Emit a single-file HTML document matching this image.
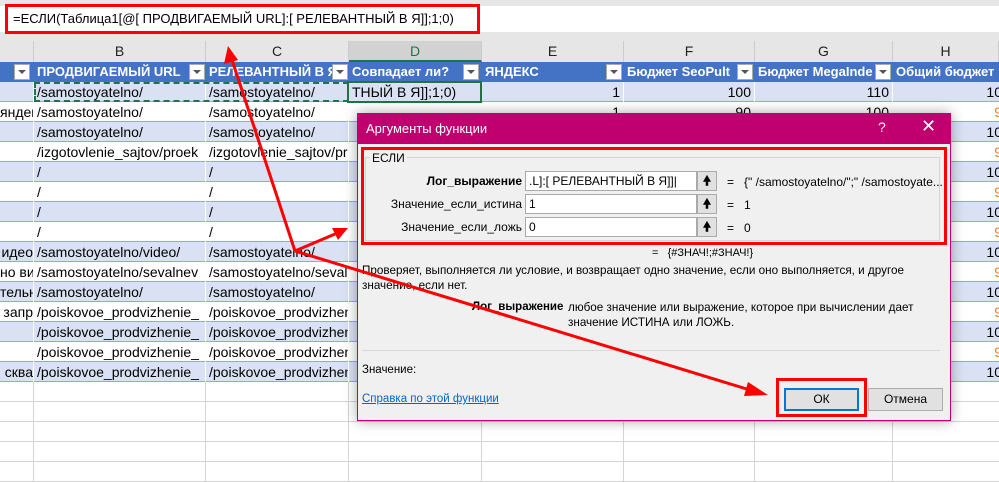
<!DOCTYPE html>
<html><head><meta charset="utf-8"><style>
*{margin:0;padding:0;box-sizing:border-box}
body{width:999px;height:470px;overflow:hidden;background:#fff;font-family:"Liberation Sans","DejaVu Sans",sans-serif;position:relative}
.a{position:absolute}
.r{position:absolute;left:0;width:1040px;height:20px;border-bottom:1px solid #D4D4D4}
.r.t{border-bottom:1px solid #8EA9DB}
.r.b{background:#D9E1F2}
.c{position:absolute;top:0;height:20px;line-height:20px;font-size:14px;color:#000;white-space:nowrap;overflow:hidden;padding:0 3px;border-right:1px solid #D4D4D4}
.r.t .c{border-right:1px solid #fff}
.r.b .c{border-right:1px solid #fff}
.A{left:0;width:34px;text-align:right;padding:0}
.B{left:34px;width:172px}.C{left:206px;width:143px}.D{left:349px;width:133px}.E{left:482px;width:142px;text-align:right}.F{left:624px;width:131px;text-align:right}.G{left:755px;width:138px;text-align:right}.H{left:893px;width:113px;text-align:right;border-right:none}
.o{color:#E67E22}
.hd .c{color:#fff;font-weight:bold;background:#4472C4;border-right:1px solid #4472C4;font-size:13px}
.dd{position:absolute;top:2px;width:16px;height:16px;background:#fff;border:1px solid #aaa}
.dd:after{content:"";position:absolute;left:3px;top:5px;border-left:4px solid transparent;border-right:4px solid transparent;border-top:4px solid #555}
.ch{position:absolute;top:41px;height:21px;background:#E6E6E6;border-right:1px solid #ccc;text-align:center;font-size:14px;line-height:21px;color:#222}
.lbl{position:absolute;font-size:12px;color:#000;white-space:nowrap}
.inp{position:absolute;left:525px;width:172px;height:20px;background:#fff;border:1px solid #aaa;font-size:12px;line-height:18px;padding-left:3px}
.ub{position:absolute;left:697px;width:20px;height:20px;background:#E1E1E1;border:1px solid #aaa;font-size:13px;text-align:center;line-height:18px;font-weight:bold}
</style></head><body>
<div class="a" style="left:0;top:0;width:999px;height:41px;background:#E6E6E6"></div>
<div class="a" style="left:0;top:6px;width:999px;height:26px;background:#fff"></div>
<div class="a" style="left:5px;top:4px;width:475px;height:30px;border:3px solid #f00"></div>
<div class="a" style="left:13px;top:11px;font-size:13px;color:#000">=ЕСЛИ(Таблица1[@[ ПРОДВИГАЕМЫЙ URL]:[ РЕЛЕВАНТНЫЙ В Я]];1;0)</div>
<div class="ch" style="left:0;width:34px"></div>
<div class="ch" style="left:34px;width:172px">B</div>
<div class="ch" style="left:206px;width:143px">C</div>
<div class="ch" style="left:349px;width:133px;background:#D2D2D2;border-bottom:2px solid #217346;color:#217346">D</div>
<div class="ch" style="left:482px;width:142px">E</div>
<div class="ch" style="left:624px;width:131px">F</div>
<div class="ch" style="left:755px;width:138px">G</div>
<div class="ch" style="left:893px;width:106px">H</div>
<div class="r hd" style="top:62px;border:none">
<div class="c A"><div class="dd" style="left:14px"></div></div>
<div class="c B">ПРОДВИГАЕМЫЙ URL<div class="dd" style="left:155px"></div></div>
<div class="c C">РЕЛЕВАНТНЫЙ В Я<div class="dd" style="left:126px"></div></div>
<div class="c D" style="background:#4472C4">Совпадает ли?<div class="dd" style="left:114px"></div></div>
<div class="c E" style="text-align:left">ЯНДЕКС<div class="dd" style="left:124px"></div></div>
<div class="c F" style="text-align:left">Бюджет SeoPult<div class="dd" style="left:113px"></div></div>
<div class="c G" style="text-align:left">Бюджет MegaInde<div class="dd" style="left:120px"></div></div>
<div class="c H" style="text-align:left">Общий бюджет</div>
</div>
<div class="r t b" style="top:82px"><div class="c A"></div><div class="c B">/samostoyatelno/</div><div class="c C">/samostoyatelno/</div><div class="c D">ТНЫЙ В Я]];1;0)</div><div class="c E">1</div><div class="c F">100</div><div class="c G">110</div><div class="c H">10</div></div>
<div class="r t" style="top:102px"><div class="c A">янден</div><div class="c B">/samostoyatelno/</div><div class="c C">/samostoyatelno/</div><div class="c D"></div><div class="c E">1</div><div class="c F">90</div><div class="c G">100</div><div class="c H o">9</div></div>
<div class="r t b" style="top:122px"><div class="c A"></div><div class="c B">/samostoyatelno/</div><div class="c C">/samostoyatelno/</div><div class="c H">10</div></div>
<div class="r t" style="top:142px"><div class="c A"></div><div class="c B">/izgotovlenie_sajtov/proek</div><div class="c C">/izgotovlenie_sajtov/pr</div><div class="c H o">9</div></div>
<div class="r t b" style="top:162px"><div class="c A"></div><div class="c B">/</div><div class="c C">/</div><div class="c H">10</div></div>
<div class="r t" style="top:182px"><div class="c A"></div><div class="c B">/</div><div class="c C">/</div><div class="c H o">9</div></div>
<div class="r t b" style="top:202px"><div class="c A"></div><div class="c B">/</div><div class="c C">/</div><div class="c H">10</div></div>
<div class="r t" style="top:222px"><div class="c A"></div><div class="c B">/</div><div class="c C">/</div><div class="c H o">9</div></div>
<div class="r t b" style="top:242px"><div class="c A">идео</div><div class="c B">/samostoyatelno/video/</div><div class="c C">/samostoyatelno/</div><div class="c H">10</div></div>
<div class="r t" style="top:262px"><div class="c A">но вид</div><div class="c B">/samostoyatelno/sevalnev</div><div class="c C">/samostoyatelno/sevaln</div><div class="c H o">9</div></div>
<div class="r t b" style="top:282px"><div class="c A">тельн</div><div class="c B">/samostoyatelno/</div><div class="c C">/samostoyatelno/</div><div class="c H">10</div></div>
<div class="r t" style="top:302px"><div class="c A">запр</div><div class="c B">/poiskovoe_prodvizhenie_</div><div class="c C">/poiskovoe_prodvizhen</div><div class="c H o">9</div></div>
<div class="r t b" style="top:322px"><div class="c A"></div><div class="c B">/poiskovoe_prodvizhenie_</div><div class="c C">/poiskovoe_prodvizhen</div><div class="c H">10</div></div>
<div class="r t" style="top:342px"><div class="c A"></div><div class="c B">/poiskovoe_prodvizhenie_</div><div class="c C">/poiskovoe_prodvizhen</div><div class="c H o">9</div></div>
<div class="r t b" style="top:362px"><div class="c A">сква</div><div class="c B">/poiskovoe_prodvizhenie_</div><div class="c C">/poiskovoe_prodvizhen</div><div class="c H">10</div></div>
<div class="r" style="top:382px"><div class="c A"></div><div class="c B"></div><div class="c C"></div><div class="c D"></div><div class="c E"></div><div class="c F"></div><div class="c G"></div></div>
<div class="r" style="top:402px"><div class="c A"></div><div class="c B"></div><div class="c C"></div><div class="c D"></div><div class="c E"></div><div class="c F"></div><div class="c G"></div></div>
<div class="r" style="top:422px"><div class="c A"></div><div class="c B"></div><div class="c C"></div><div class="c D"></div><div class="c E"></div><div class="c F"></div><div class="c G"></div></div>
<div class="r" style="top:442px"><div class="c A"></div><div class="c B"></div><div class="c C"></div><div class="c D"></div><div class="c E"></div><div class="c F"></div><div class="c G"></div></div>
<div class="r" style="top:462px"><div class="c A"></div><div class="c B"></div><div class="c C"></div><div class="c D"></div><div class="c E"></div><div class="c F"></div><div class="c G"></div></div>
<div class="a" style="left:34px;top:82px;width:315px;height:20px;border:2px dashed #217346"></div>
<div class="a" style="left:347px;top:81px;width:135px;height:22px;border:2px solid #217346"></div>
<div class="a" style="left:357px;top:113px;width:594px;height:308px;background:#F0F0F0;border:1px solid #C0006F;box-shadow:0 0 12px rgba(0,0,0,.35)"></div>
<div class="a" style="left:357px;top:113px;width:594px;height:31px;background:#C0006F"></div>
<div class="a" style="left:366px;top:121px;font-size:13px;color:#fff">Аргументы функции</div>
<div class="a" style="left:878px;top:119px;font-size:14px;color:#fff">?</div>
<div class="a" style="left:921px;top:116px;font-size:18px;color:#fff">✕</div>
<div class="a" style="left:365px;top:157px;width:575px;height:84px;border:1px solid #d4d4d4"></div>
<div class="a" style="left:370px;top:151px;font-size:12px;background:#F0F0F0;padding:0 2px">ЕСЛИ</div>
<div class="lbl" style="right:477px;top:174px;font-weight:bold">Лог_выражение</div>
<div class="lbl" style="right:477px;top:197px">Значение_если_истина</div>
<div class="lbl" style="right:477px;top:220px">Значение_если_ложь</div>
<div class="inp" style="top:171px">.L]:[ РЕЛЕВАНТНЫЙ В Я]]|</div>
<div class="inp" style="top:194px">1</div>
<div class="inp" style="top:217px">0</div>
<div class="ub" style="top:171px">🠝</div>
<div class="ub" style="top:194px">🠝</div>
<div class="ub" style="top:217px">🠝</div>
<div class="lbl" style="left:727px;top:175px">=&nbsp;&nbsp; {" /samostoyatelno/";" /samostoyate...</div>
<div class="lbl" style="left:727px;top:198px">=&nbsp;&nbsp; 1</div>
<div class="lbl" style="left:727px;top:221px">=&nbsp;&nbsp; 0</div>
<div class="a" style="left:361px;top:147px;width:586px;height:98px;border:3px solid #f00"></div>
<div class="lbl" style="left:652px;top:247px;font-size:11px">=&nbsp;&nbsp; {#ЗНАЧ!;#ЗНАЧ!}</div>
<div class="lbl" style="left:362px;top:264px;font-size:11.7px">Проверяет, выполняется ли условие, и возвращает одно значение, если оно выполняется, и другое</div>
<div class="lbl" style="left:362px;top:279px;font-size:11.7px">значение, если нет.</div>
<div class="lbl" style="left:472px;top:301px;font-size:11.5px;font-weight:bold">Лог_выражение</div>
<div class="lbl" style="left:568px;top:301px;font-size:11.7px">любое значение или выражение, которое при вычислении дает</div>
<div class="lbl" style="left:568px;top:316px;font-size:11.7px">значение ИСТИНА или ЛОЖЬ.</div>
<div class="a" style="left:362px;top:350px;width:578px;height:1px;background:#d8d8d8"></div>
<div class="lbl" style="left:362px;top:364px;font-size:11.5px">Значение:</div>
<div class="lbl" style="left:362px;top:393px;font-size:11.5px;color:#0066CC;text-decoration:underline">Справка по этой функции</div>
<div class="a" style="left:784px;top:388px;width:75px;height:23px;background:#E1E1E1;border:2px solid #0078D7;font-size:12px;text-align:center;line-height:19px">ОК</div>
<div class="a" style="left:868px;top:388px;width:75px;height:23px;background:#E1E1E1;border:1px solid #adadad;font-size:12px;text-align:center;line-height:21px">Отмена</div>
<div class="a" style="left:776px;top:378px;width:91px;height:39px;border:3px solid #f00"></div>
<svg class="a" style="left:0;top:0" width="999" height="470">
<g stroke="#f00" stroke-width="3" fill="none">
<line x1="295" y1="251" x2="232" y2="60"/>
<line x1="295" y1="251" x2="335" y2="234"/>
<line x1="295" y1="251" x2="750" y2="390"/>
</g>
<g fill="#f00">
<polygon points="228,46 224,64 238,60"/>
<polygon points="348,228 332,228 338,240"/>
<polygon points="768,395 748,382 744,396"/>
</g>
</svg>
</body></html>
